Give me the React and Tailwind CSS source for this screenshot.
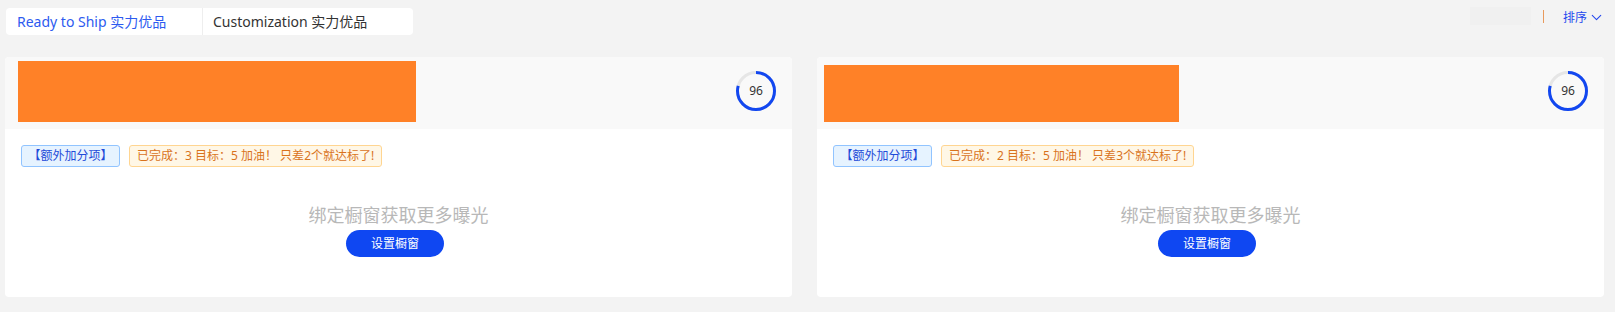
import { ChevronDown } from 'lucide-react';

const font = { fontFamily: '"Noto Sans", "Noto Sans CJK SC", sans-serif' };

function Score({ value }) {
  const r = 18.5;
  const c = 2 * Math.PI * r;
  return (
    <div className="relative w-[42px] h-[42px]">
      <svg width="42" height="42" viewBox="0 0 42 42">
        <circle cx="21" cy="21" r={r} fill="none" stroke="#e6e6e6" strokeWidth="3" />
        <circle
          cx="21"
          cy="21"
          r={r}
          fill="none"
          stroke="#1247f0"
          strokeWidth="3"
          strokeDasharray={`${c * 0.79} ${c}`}
          transform="rotate(-90 21 21)"
        />
      </svg>
      <span className="absolute inset-0 flex items-center justify-center text-[12px] text-[#333]">{value}</span>
    </div>
  );
}

function Card({ bannerClass, done, left }) {
  return (
    <div className="flex-1 bg-white rounded-[4px] h-[240px] flex flex-col overflow-hidden">
      <div className="h-[72px] bg-[#f9f9f9] flex items-start justify-between pr-[15px]">
        <div className={bannerClass}></div>
        <div className="mt-[13px]">
          <Score value={96} />
        </div>
      </div>
      <div className="flex gap-[9px] pl-[16px] pt-[16px]">
        <span className="h-[22px] w-[99px] flex items-center justify-center rounded-[3px] border border-[#91c4ff] bg-[#e6f3ff] text-[12px] text-[#1f4bd8]">
          【额外加分项】
        </span>
        <span className="h-[22px] px-[7px] flex items-center rounded-[3px] border border-[#ffd591] bg-[#fff7e6] text-[12px] text-[#d9731c]">
          已完成：{done} 目标：5 加油！ 只差{left}个就达标了!
        </span>
      </div>
      <div className="flex flex-col items-center mt-[36px]">
        <div className="text-[18px] leading-[24px] text-[#b8b8b8]">绑定橱窗获取更多曝光</div>
        <button className="mt-[3px] mr-[7px] w-[98px] h-[27px] rounded-full bg-[#0f47f2] text-white text-[12px]">设置橱窗</button>
      </div>
    </div>
  );
}

export default function App() {
  return (
    <div className="w-[1615px] h-[312px] bg-[#f3f3f3] relative" style={font}>
      <div className="flex justify-between items-start pl-[6px] pr-[10px]">
        <div className="mt-[8px] flex h-[27px] bg-white rounded-[4px] text-[14px]">
          <div className="w-[197px] flex items-center pl-[11px] text-[#2d5bf0] border-r border-[#eeeeee]">
            Ready to Ship 实力优品
          </div>
          <div className="w-[210px] flex items-center pl-[10px] text-[#333]">Customization 实力优品</div>
        </div>
        <div className="flex items-center mt-[5px] h-[22px]">
          <div className="w-[61px] h-[18px] bg-[#f0f0f0]"></div>
          <div className="ml-[12px] w-px h-[13px] bg-[#e89a5c]"></div>
          <div className="ml-[19px] flex items-center text-[12px] text-[#2448ee] pt-[3px]">
            排序
            <ChevronDown className="w-[17px] h-[17px] ml-[1px]" strokeWidth={1.5} />
          </div>
        </div>
      </div>
      <div className="flex gap-[25px] pl-[5px] pr-[11px] mt-[22px]">
        <Card bannerClass="ml-[13px] mt-[4px] w-[398px] h-[61px] bg-[#ff8127]" done={3} left={2} />
        <Card bannerClass="ml-[7px] mt-[8px] w-[355px] h-[57px] bg-[#ff8127]" done={2} left={3} />
      </div>
    </div>
  );
}
